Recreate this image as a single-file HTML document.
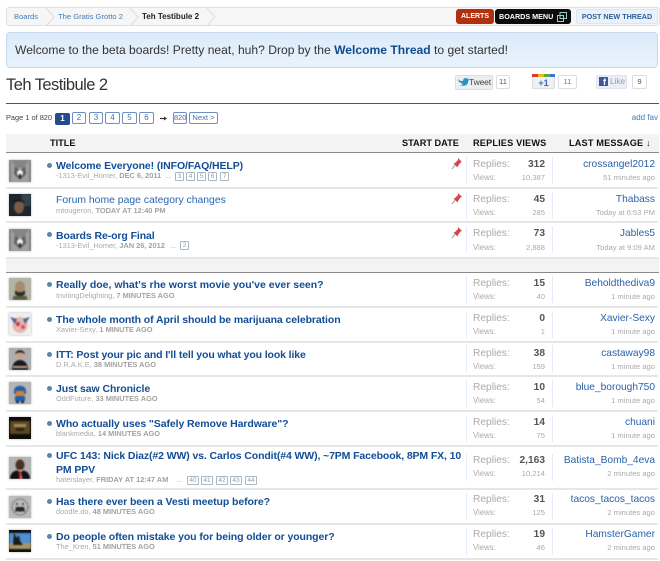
<!DOCTYPE html>
<html><head><meta charset="utf-8"><style>
html,body{margin:0;padding:0;background:#fff}
body{position:relative;width:660px;height:561px;overflow:hidden;font-family:"Liberation Sans",Arial,sans-serif;filter:blur(.3px)}
div,span,svg{position:absolute;white-space:nowrap}
b span,span span{position:static}
.t{left:56px;font-size:10.5px;line-height:14px;font-weight:bold;color:#124d96;margin-top:1px;letter-spacing:-.09px}
.n{font-weight:normal;color:#2a66ae;font-size:10.4px;letter-spacing:0}
.s{left:56px;font-size:7.4px;line-height:12px;color:#aaa}
.s b{color:#a2a2a2}
.b{left:47px;width:5px;height:5px;border-radius:50%;background:#5f84aa}
.sep{left:6px;width:652px;height:2px;background:#e6e6e6}
.d{width:1px;height:27px;background:#e2edf9}
.rl{left:473px;font-size:10.2px;line-height:14px;color:#aaa;margin-top:1px}
.vl{left:473px;font-size:7.8px;line-height:12px;color:#aaa;margin-top:1px}
.rn{right:115px;font-size:10.2px;line-height:14px;font-weight:bold;color:#555;margin-top:1px}
.vn{right:115px;font-size:7.6px;line-height:12px;color:#aaa;margin-top:1px}
.u{right:5px;font-size:10.2px;line-height:14px;color:#2a62a8;margin-top:1px}
.tm{right:5px;font-size:7.6px;line-height:12px;color:#aaa;margin-top:1px}
.a{left:9px;width:22px;height:22px;overflow:hidden;box-shadow:0 0 2px #aaa;background:#aaa}
.a svg{left:0;top:0;filter:blur(.7px)}
.hd{font-size:9.2px;font-weight:bold;color:#111;line-height:12px;top:137px}
.p{top:112px;height:10px;border:1px solid #6f8fc0;border-radius:2px;font-size:8px;line-height:10px;text-align:center;color:#4a6ea5;background:#fff}
.m{height:7px;border:1px solid #a9b8c6;border-radius:1px;font-size:6.5px;line-height:7px;text-align:center;color:#999}
.c{top:75px;height:12px;border:1px solid #ddd;border-radius:2px;background:#fff;font-size:7.6px;line-height:12px;text-align:center;color:#555}
</style></head><body>

<div style="left:6px;top:7px;width:652px;height:17px;border:1px solid #e0e0e0;border-radius:3px;background:#f6f6f6"></div>
<svg style="left:0;top:0" width="230" height="30"><path d="M46 8l8 9-8 9M130 8l8 9-8 9M207 8l8 9-8 9" fill="none" stroke="#dcdcdc"/></svg>
<span style="left:14px;top:11px;font-size:7.6px;line-height:12px;color:#3f7db5">Boards</span>
<span style="left:58px;top:11px;font-size:7.6px;line-height:12px;color:#3f7db5">The Gratis Grotto 2</span>
<span style="left:142px;top:11px;font-size:8px;line-height:12px;font-weight:bold;color:#222">Teh Testibule 2</span>

<div style="left:456px;top:9px;width:38px;height:15px;background:#b3300f;border-radius:3px;color:#fff;font-weight:bold;font-size:7px;line-height:15px;text-align:center">ALERTS</div>
<div style="left:495px;top:9px;width:76px;height:15px;background:#0c0c0c;border-radius:3px;color:#fff;font-weight:bold;font-size:7.2px;line-height:15px"><span style="left:4px;top:0">BOARDS MENU</span>
<svg style="left:62px;top:3px" width="10" height="10"><path d="M3 .5h6.500v6H3zM.5 3.500H6.500v6H.5z" fill="none" stroke="#9cc" stroke-width="1"/></svg></div>
<div style="left:576px;top:9px;width:80px;height:13px;background:#e9f1fa;border:1px solid #dbe6f1;border-radius:2px;color:#2f6098;font-weight:bold;font-size:7.2px;line-height:13px;text-align:center">POST NEW THREAD</div>

<div style="left:6px;top:32px;width:650px;height:34px;border:1px solid #c6d8ea;border-radius:4px;background:linear-gradient(#dcebfa,#e9f3fc)"></div>
<span style="left:15px;top:42px;font-size:12.1px;line-height:17px;color:#333">Welcome to the beta boards! Pretty neat, huh? Drop by the <b style="color:#114a8c">Welcome Thread</b> to get started!</span>

<span style="left:6px;top:74px;font-size:16.5px;line-height:22px;color:#333;letter-spacing:-.55px">Teh Testibule 2</span>
<div style="left:6px;top:103px;width:653px;height:1px;background:#555"></div>

<div style="left:455px;top:75px;width:36px;height:13px;border:1px solid #ddd;border-radius:2px;background:#eceff1"></div>
<svg style="left:458px;top:77px" width="11" height="10"><path d="M0 2c2 2 3 2 5 2 0-3 3-4 5-2l1-.5-.5 1.500L11 3c-.5 1-1 1-1 2 0 3-4 5-8 3 2 0 2.500-.5 3-1-1 0-2-1-2-1.500H1.500C1 5 .5 4 .5 3 .5 3 0 2.500 0 2z" fill="#2e8fc6"/></svg>
<span style="left:469px;top:75px;font-size:8.6px;line-height:14px;color:#444;letter-spacing:-.2px">Tweet</span>
<div class="c" style="left:496px;width:12px">11</div>

<div style="left:532px;top:75px;width:21px;height:12px;border:1px solid #ddd;border-radius:2px;background:#eef0f2;overflow:hidden;text-align:center;font-size:9px;font-weight:bold;line-height:15px;color:#2f6ebd">+1</div>
<div style="left:532px;top:74px;width:6px;height:3px;background:#d83c2c"></div>
<div style="left:538px;top:74px;width:6px;height:3px;background:#e8b820"></div>
<div style="left:544px;top:74px;width:6px;height:3px;background:#5aa83c"></div>
<div style="left:550px;top:74px;width:5px;height:3px;background:#3a76d0"></div>
<div class="c" style="left:558px;width:17px;color:#777">11</div>

<div style="left:596px;top:75px;width:29px;height:12px;border:1px solid #e0e4ee;border-radius:2px;background:#eceef5"></div>
<div style="left:599px;top:77px;width:9px;height:9px;background:#3b5a9a"></div>
<span style="left:603px;top:78px;font-size:9px;line-height:9px;font-weight:bold;color:#fff">f</span>
<span style="left:610px;top:75px;font-size:8.2px;line-height:14px;color:#8b9dc3">Like</span>
<div class="c" style="left:632px;width:13px">9</div>

<span style="left:6px;top:112px;font-size:7.4px;line-height:12px;color:#444">Page 1 of 820</span>
<div class="p" style="left:55px;width:15px;top:113px;height:12px;line-height:12px;border:0;background:#27498f;color:#fff;font-weight:bold">1</div>
<div class="p" style="left:72px;width:12px">2</div>
<div class="p" style="left:89px;width:12px">3</div>
<div class="p" style="left:105px;width:13px">4</div>
<div class="p" style="left:122px;width:13px">5</div>
<div class="p" style="left:139px;width:13px">6</div>
<svg style="left:160px;top:115px" width="7" height="7"><path d="M0 3.500h5.500" stroke="#333" stroke-width="1.200"/><path d="M4 1.500l3 2-3 2z" fill="#333"/></svg>
<div class="p" style="left:173px;width:12px;font-size:7.4px">820</div>
<div class="p" style="left:189px;width:27px;font-size:7.6px">Next &gt;</div>
<span style="right:2px;top:112px;font-size:8px;line-height:12px;color:#3f7db5">add fav</span>

<div style="left:6px;top:134px;width:653px;height:18px;background:#f3f3f3;border-bottom:1px solid #8a8a8a"></div>
<span class="hd" style="left:50px">TITLE</span>
<span class="hd" style="left:402px">START DATE</span>
<span class="hd" style="left:473px;letter-spacing:.15px">REPLIES VIEWS</span>
<span class="hd" style="left:569px;letter-spacing:.15px">LAST MESSAGE ↓</span>

<div class="sep" style="top:187px"></div>
<div class="sep" style="top:221px"></div>
<div style="left:6px;top:257px;width:653px;background:#f3f3f3;border-top:2px solid #e6e6e6;border-bottom:1px solid #8a8a8a;box-sizing:border-box;height:16px"></div>
<div class="sep" style="top:306px"></div>
<div class="sep" style="top:341px"></div>
<div class="sep" style="top:375px"></div>
<div class="sep" style="top:410px"></div>
<div class="sep" style="top:445px"></div>
<div class="sep" style="top:488px"></div>
<div class="sep" style="top:523px"></div>
<div class="sep" style="top:558px"></div>

<!-- row 1 -->
<div class="a" style="top:160px"><svg width="22" height="22"><rect width="22" height="22" fill="#858585"/><path d="M2 0l5 8h8l5-8v22H2z" fill="#a0a0a0"/><path d="M6 6l5 5 5-5 1 8-6 6-6-6z" fill="#5e5e5e"/><circle cx="11" cy="13" r="3" fill="#f4f4f4"/><rect x="10" y="14" width="2" height="4" fill="#222"/></svg></div>
<div class="b" style="top:163px"></div>
<span class="t" style="top:158px">Welcome Everyone! (INFO/FAQ/HELP)</span>
<span class="s" style="top:170px">-1313-Evil_Homer, <b>DEC 6, 2011</b></span>
<span class="s" style="left:165px;top:170px">...</span>
<div class="m" style="left:175px;top:172px;width:7px">3</div><div class="m" style="left:186px;top:172px;width:7px">4</div><div class="m" style="left:197px;top:172px;width:7px">5</div><div class="m" style="left:208px;top:172px;width:7px">6</div><div class="m" style="left:220px;top:172px;width:7px">7</div>
<svg style="left:451px;top:158px" width="12" height="12"><path d="M7 0l4 4-1.500.5L7 8 6.500 9.500 2.500 5.500 4 5l3-3z" fill="#d9434a"/><path d="M4 7L1 11" stroke="#999"/></svg>
<div class="d" style="left:466px;top:157px"></div><div class="d" style="left:552px;top:157px"></div>
<span class="rl" style="top:157px">Replies:</span><span class="vl" style="top:171px">Views:</span><span class="rn" style="top:157px">312</span><span class="vn" style="top:171px">10,387</span><span class="u" style="top:157px">crossangel2012</span><span class="tm" style="top:171px">51 minutes ago</span>

<!-- row 2 -->
<div class="a" style="top:194px;background:#1c2228"><svg width="22" height="22"><rect width="22" height="22" fill="#1d262c"/><path d="M12 0h10v12h-8z" fill="#33444f"/><ellipse cx="10" cy="13" rx="5" ry="6.500" fill="#7c5a48"/><path d="M4 9c1-4 11-4 12 0-4-2-8-2-12 0z" fill="#111"/></svg></div>
<span class="t n" style="top:193px">Forum home page category changes</span>
<span class="s" style="top:205px">mtougeron, <b>TODAY AT 12:40 PM</b></span>
<svg style="left:451px;top:193px" width="12" height="12"><path d="M7 0l4 4-1.500.5L7 8 6.500 9.500 2.500 5.500 4 5l3-3z" fill="#d9434a"/><path d="M4 7L1 11" stroke="#999"/></svg>
<div class="d" style="left:466px;top:192px"></div><div class="d" style="left:552px;top:192px"></div>
<span class="rl" style="top:192px">Replies:</span><span class="vl" style="top:206px">Views:</span><span class="rn" style="top:192px">45</span><span class="vn" style="top:206px">285</span><span class="u" style="top:192px">Thabass</span><span class="tm" style="top:206px">Today at 6:53 PM</span>

<!-- row 3 -->
<div class="a" style="top:229px"><svg width="22" height="22"><rect width="22" height="22" fill="#858585"/><path d="M2 0l5 8h8l5-8v22H2z" fill="#a0a0a0"/><path d="M6 6l5 5 5-5 1 8-6 6-6-6z" fill="#5e5e5e"/><circle cx="11" cy="13" r="3" fill="#f4f4f4"/><rect x="10" y="14" width="2" height="4" fill="#222"/></svg></div>
<div class="b" style="top:232px"></div>
<span class="t" style="top:228px">Boards Re-org Final</span>
<span class="s" style="top:240px">-1313-Evil_Homer, <b>JAN 26, 2012</b></span>
<span class="s" style="left:170px;top:240px">...</span>
<div class="m" style="left:180px;top:241px;width:7px">2</div>
<svg style="left:451px;top:227px" width="12" height="12"><path d="M7 0l4 4-1.500.5L7 8 6.500 9.500 2.500 5.500 4 5l3-3z" fill="#d9434a"/><path d="M4 7L1 11" stroke="#999"/></svg>
<div class="d" style="left:466px;top:226px"></div><div class="d" style="left:552px;top:226px"></div>
<span class="rl" style="top:226px">Replies:</span><span class="vl" style="top:241px">Views:</span><span class="rn" style="top:226px">73</span><span class="vn" style="top:241px">2,888</span><span class="u" style="top:226px">Jables5</span><span class="tm" style="top:241px">Today at 9:09 AM</span>

<!-- row 4 -->
<div class="a" style="top:278px;background:#b5b5a8"><svg width="22" height="22"><rect width="22" height="22" fill="#b4b4a4"/><ellipse cx="11" cy="9" rx="5" ry="6" fill="#a88a70"/><path d="M6 12c2 3 8 3 10 0v4c-2 3-8 3-10 0z" fill="#2c2c24"/><rect x="4" y="18" width="14" height="4" fill="#5b5b46"/></svg></div>
<div class="b" style="top:282px"></div>
<span class="t" style="top:277px;letter-spacing:0">Really doe, what's rhe worst movie you've ever seen?</span>
<span class="s" style="top:290px">InvitingDelighting, <b>7 MINUTES AGO</b></span>
<div class="d" style="left:466px;top:276px"></div><div class="d" style="left:552px;top:276px"></div>
<span class="rl" style="top:276px">Replies:</span><span class="vl" style="top:290px">Views:</span><span class="rn" style="top:276px">15</span><span class="vn" style="top:290px">40</span><span class="u" style="top:276px">Beholdthediva9</span><span class="tm" style="top:290px">1 minute ago</span>

<!-- row 5 -->
<div class="a" style="top:313px;background:#eee"><svg width="22" height="22"><rect width="22" height="22" fill="#eee"/><ellipse cx="11" cy="12" rx="7.500" ry="8" fill="#e5b5b5"/><path d="M1 4l7 2-2 5zM21 4l-7 2 2 5z" fill="#46628e"/><circle cx="9" cy="11" r="2" fill="#c33"/><circle cx="14" cy="14" r="2" fill="#c55"/></svg></div>
<div class="b" style="top:317px"></div>
<span class="t" style="top:312px">The whole month of April should be marijuana celebration</span>
<span class="s" style="top:324px">Xavier-Sexy, <b>1 MINUTE AGO</b></span>
<div class="d" style="left:466px;top:311px"></div><div class="d" style="left:552px;top:311px"></div>
<span class="rl" style="top:311px">Replies:</span><span class="vl" style="top:325px">Views:</span><span class="rn" style="top:311px">0</span><span class="vn" style="top:325px">1</span><span class="u" style="top:311px">Xavier-Sexy</span><span class="tm" style="top:325px">1 minute ago</span>

<!-- row 6 -->
<div class="a" style="top:348px;background:#b0b0b0"><svg width="22" height="22"><rect width="22" height="22" fill="#afafaf"/><circle cx="11" cy="7" r="4" fill="#caa08c"/><path d="M6 6c1-5 9-5 10 0-3-2-7-2-10 0z" fill="#222"/><path d="M3 22c0-7 4-10 8-10s8 3 8 10z" fill="#1a1a1a"/><path d="M4 18h14v2H4z" fill="#caa08c"/></svg></div>
<div class="b" style="top:352px"></div>
<span class="t" style="top:347px;letter-spacing:-.12px">ITT: Post your pic and I'll tell you what you look like</span>
<span class="s" style="top:359px">D.R.A.K.E, <b>38 MINUTES AGO</b></span>
<div class="d" style="left:466px;top:345px"></div><div class="d" style="left:552px;top:345px"></div>
<span class="rl" style="top:346px">Replies:</span><span class="vl" style="top:360px">Views:</span><span class="rn" style="top:346px">38</span><span class="vn" style="top:360px">159</span><span class="u" style="top:346px">castaway98</span><span class="tm" style="top:360px">1 minute ago</span>

<!-- row 7 -->
<div class="a" style="top:382px;background:#b5b5b5"><svg width="22" height="22"><rect width="22" height="22" fill="#b5b5b5"/><path d="M5 9c0-7 12-7 12 0v3H5z" fill="#1e5fae"/><rect x="7" y="9" width="8" height="5" fill="#e07a30"/><rect x="6" y="14" width="10" height="5" fill="#1e5fae"/><rect x="7" y="19" width="3" height="2" fill="#123"/><rect x="12" y="19" width="3" height="2" fill="#123"/></svg></div>
<div class="b" style="top:386px"></div>
<span class="t" style="top:381px">Just saw Chronicle</span>
<span class="s" style="top:393px">OddFuture, <b>33 MINUTES AGO</b></span>
<div class="d" style="left:466px;top:380px"></div><div class="d" style="left:552px;top:380px"></div>
<span class="rl" style="top:380px">Replies:</span><span class="vl" style="top:394px">Views:</span><span class="rn" style="top:380px">10</span><span class="vn" style="top:394px">54</span><span class="u" style="top:380px">blue_borough750</span><span class="tm" style="top:394px">1 minute ago</span>

<!-- row 8 -->
<div class="a" style="top:417px;background:#111"><svg width="22" height="22"><rect width="22" height="22" fill="#0e0c08"/><rect x="1" y="4" width="20" height="13" fill="#5a4724"/><rect x="5" y="7" width="12" height="3" fill="#a88a50"/><rect x="7" y="11" width="8" height="3" fill="#2d2413"/></svg></div>
<div class="b" style="top:421px"></div>
<span class="t" style="top:416px">Who actually uses "Safely Remove Hardware"?</span>
<span class="s" style="top:428px">blankmedia, <b>14 MINUTES AGO</b></span>
<div class="d" style="left:466px;top:415px"></div><div class="d" style="left:552px;top:415px"></div>
<span class="rl" style="top:415px">Replies:</span><span class="vl" style="top:429px">Views:</span><span class="rn" style="top:415px">14</span><span class="vn" style="top:429px">75</span><span class="u" style="top:415px">chuani</span><span class="tm" style="top:429px">1 minute ago</span>

<!-- row 9 -->
<div class="a" style="top:457px;background:#b0b0b0"><svg width="22" height="22"><rect width="22" height="22" fill="#b4b4b4"/><ellipse cx="11" cy="8" rx="4.500" ry="5.500" fill="#4a2f22"/><path d="M1 22c0-6 4-9 10-9s10 3 10 9z" fill="#111"/><path d="M8 13h6l-2 2 1 7h-3l1-7z" fill="#eee"/><rect x="10" y="14" width="2" height="8" fill="#c22"/></svg></div>
<div class="b" style="top:453px"></div>
<span class="t" style="top:449px;line-height:13.500px;letter-spacing:-.115px">UFC 143: Nick Diaz(#2 WW) vs. Carlos Condit(#4 WW), ~7PM Facebook, 8PM FX, 10<br>PM PPV</span>
<span class="s" style="top:474px">haterslayer, <b>FRIDAY AT 12:47 AM</b></span>
<span class="s" style="left:176px;top:474px">...</span>
<div class="m" style="left:187px;top:476px;width:10px">40</div><div class="m" style="left:201px;top:476px;width:10px">41</div><div class="m" style="left:216px;top:476px;width:10px">42</div><div class="m" style="left:230px;top:476px;width:10px">43</div><div class="m" style="left:245px;top:476px;width:10px">44</div>
<div class="d" style="left:466px;top:454px"></div><div class="d" style="left:552px;top:454px"></div>
<span class="rl" style="top:453px">Replies:</span><span class="vl" style="top:467px">Views:</span><span class="rn" style="top:453px">2,163</span><span class="vn" style="top:467px">10,214</span><span class="u" style="top:453px">Batista_Bomb_4eva</span><span class="tm" style="top:467px">2 minutes ago</span>

<!-- row 10 -->
<div class="a" style="top:496px;background:#bbb"><svg width="22" height="22"><rect width="22" height="22" fill="#bbb"/><circle cx="11" cy="11" r="8" fill="none" stroke="#555" stroke-width="1" stroke-dasharray="2 1"/><path d="M7 11h8l1 5-3-1-2 1-2-1-3 1z" fill="#222"/><circle cx="8" cy="8" r="1" fill="#333"/><circle cx="14" cy="8" r="1" fill="#333"/></svg></div>
<div class="b" style="top:499px"></div>
<span class="t" style="top:494px">Has there ever been a Vesti meetup before?</span>
<span class="s" style="top:506px">doodle.do, <b>48 MINUTES AGO</b></span>
<div class="d" style="left:466px;top:493px"></div><div class="d" style="left:552px;top:493px"></div>
<span class="rl" style="top:492px">Replies:</span><span class="vl" style="top:506px">Views:</span><span class="rn" style="top:492px">31</span><span class="vn" style="top:506px">125</span><span class="u" style="top:492px">tacos_tacos_tacos</span><span class="tm" style="top:506px">2 minutes ago</span>

<!-- row 11 -->
<div class="a" style="top:530px;background:#111"><svg width="22" height="22"><rect width="22" height="22" fill="#111"/><rect x="0" y="3" width="22" height="10" fill="#4d8fd0"/><rect x="0" y="13" width="22" height="6" fill="#a89468"/><path d="M5 3l3 5 2-3 1 6 3 4H4z" fill="#1a1a1a"/></svg></div>
<div class="b" style="top:534px"></div>
<span class="t" style="top:529px">Do people often mistake you for being older or younger?</span>
<span class="s" style="top:541px">The_Kren, <b>51 MINUTES AGO</b></span>
<div class="d" style="left:466px;top:528px"></div><div class="d" style="left:552px;top:528px"></div>
<span class="rl" style="top:527px">Replies:</span><span class="vl" style="top:541px">Views:</span><span class="rn" style="top:527px">19</span><span class="vn" style="top:541px">46</span><span class="u" style="top:527px">HamsterGamer</span><span class="tm" style="top:541px">2 minutes ago</span>

</body></html>
